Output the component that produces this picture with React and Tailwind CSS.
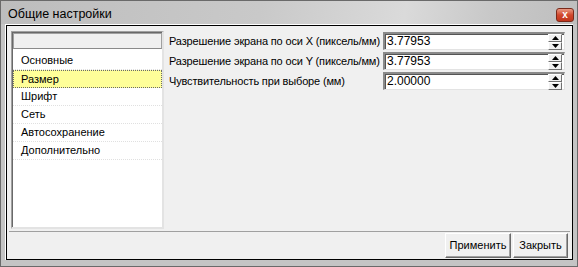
import React from "react";

function Spinner() {
  return (
    <div className="absolute right-[2px] top-[0px] flex flex-col">
      <div className="w-[14px] h-[8px] bg-[#f0f0f0] border-t border-l border-t-white border-l-white border-b border-r border-b-[#707070] border-r-[#707070] flex items-center justify-center">
        <svg width="7" height="4" viewBox="0 0 7 4"><path d="M3.5 0 L7 4 L0 4 Z" fill="#000" /></svg>
      </div>
      <div className="w-[14px] h-[8px] bg-[#f0f0f0] border-t border-l border-t-white border-l-white border-b border-r border-b-[#707070] border-r-[#707070] flex items-center justify-center">
        <svg width="7" height="4" viewBox="0 0 7 4"><path d="M0 0 L7 0 L3.5 4 Z" fill="#000" /></svg>
      </div>
    </div>
  );
}

function Field({ label, value }) {
  return (
    <div className="flex items-center h-[18px]">
      <div className="w-[214px] whitespace-nowrap text-[11px] tracking-[-0.15px] text-black leading-none">{label}</div>
      <div className="relative w-[182px] h-[18px] bg-white border-t-2 border-l-2 border-t-[#8a8a8a] border-l-[#8a8a8a] border-b border-r border-b-[#e3e3e3] border-r-[#e3e3e3] shadow-[inset_1px_1px_0_#555]">
        <div className="pl-[2px] text-[12px] leading-[15px] text-black">{value}</div>
        <Spinner />
      </div>
    </div>
  );
}

export default function App() {
  const items = ["Основные", "Размер", "Шрифт", "Сеть", "Автосохранение", "Дополнительно"];
  return (
    <div
      className="w-[578px] h-[267px] bg-[#c4c4c4] border border-[#6a6a6a] flex flex-col overflow-hidden"
      style={{ fontFamily: '"Liberation Sans", Arial, sans-serif' }}
    >
      <div className="h-[23px] flex items-start justify-between pl-[7px] pr-[3px] bg-[linear-gradient(100deg,#bdbdbd_0%,#c9c9c9_45%,#dadada_70%,#c8c8c8_85%,#bebebe_100%)]">
        <div className="text-[12.5px] text-black leading-none pt-[7px]">Общие настройки</div>
        <div className="w-[18px] h-[14px] mt-[7px] rounded-[3px] border border-[#7a2a1a] bg-[linear-gradient(#e99a84,#d1482c_50%,#c0351c)] flex items-center justify-center text-white text-[10px] font-bold leading-none">
          x
        </div>
      </div>
      <div className="flex-1 mx-[4px] mb-[6px] border-l border-t border-l-white border-t-white">
        <div className="h-full border border-black bg-[#f0f0f0] flex flex-col">
          <div className="flex pl-[4px] pt-[5px] h-[205px]">
            <div className="w-[153px] h-[198px] border-t border-l border-t-[#a0a0a0] border-l-[#a0a0a0] border-b-2 border-r-2 border-b-[#e3e3e3] border-r-[#e3e3e3] bg-white flex flex-col shadow-[inset_1px_1px_0_#696969]">
              <div className="h-[16px] ml-[1px] mt-[1px] bg-[#f0f0f0] border border-[#a0a0a0] border-b-[#8a8a8a]" />
              <div className="h-[3px]" />
              {items.map((t, i) => (
                <div
                  key={t}
                  className={
                    i === 1
                      ? "h-[18px] ml-[1px] bg-[#ffff99] border border-dotted border-[#6b6b6b] pl-[7px] text-[11px] leading-[16px] text-black"
                      : "h-[18px] ml-[1px] border-b border-dotted border-[#e0e0e0] pl-[8px] text-[11px] leading-[17px] text-black"
                  }
                >
                  {t}
                </div>
              ))}
            </div>
            <div className="flex flex-col gap-[2px] pl-[5px] pt-[1px]">
              <Field label="Разрешение экрана по оси X (пиксель/мм)" value="3.77953" />
              <Field label="Разрешение экрана по оси Y (пиксель/мм)" value="3.77953" />
              <Field label="Чувствительность при выборе (мм)" value="2.00000" />
            </div>
          </div>
          <div className="mx-[2px] border-t border-t-[#a0a0a0] flex-1 flex justify-end items-start pt-[1px] pr-[2px] gap-[2px]">
            <div className="h-[25px] w-[66px] border border-t-white border-l-white border-b-[#696969] border-r-[#696969] shadow-[inset_-1px_-1px_0_#a0a0a0] flex items-center justify-center text-[11px] text-black">
              Применить
            </div>
            <div className="h-[25px] w-[55px] border border-t-white border-l-white border-b-[#696969] border-r-[#696969] shadow-[inset_-1px_-1px_0_#a0a0a0] flex items-center justify-center text-[11px] text-black">
              Закрыть
            </div>
          </div>
        </div>
      </div>
    </div>
  );
}
